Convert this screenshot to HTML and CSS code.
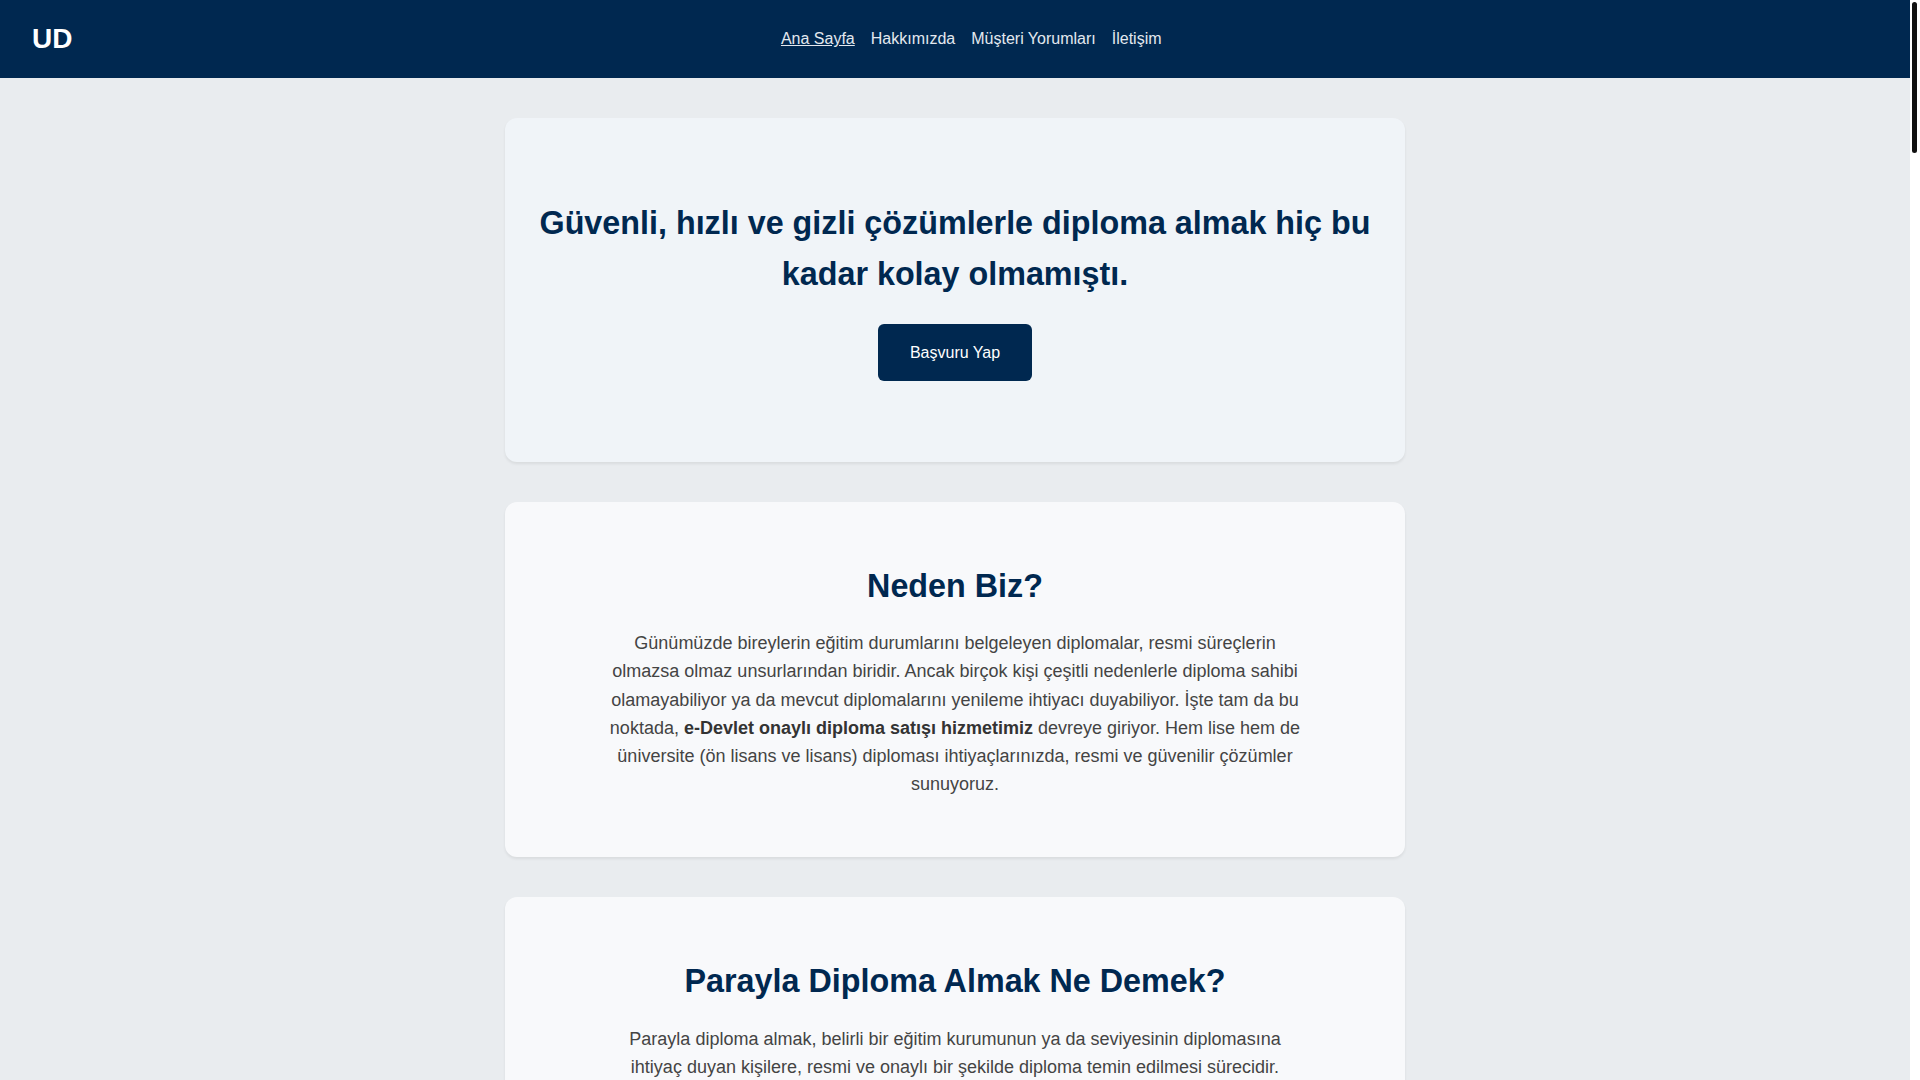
FILE: index.html
```html
<!DOCTYPE html>
<html lang="tr">
<head>
<meta charset="utf-8">
<title>UD - Diploma</title>
<link rel="stylesheet" href="styles.css">
</head>
<body>
<div class="page">
  <header class="site-header">
    <div class="logo">UD</div>
    <nav class="main-nav">
      <a href="#" class="nav-link active">Ana Sayfa</a>
      <a href="#" class="nav-link">Hakkımızda</a>
      <a href="#" class="nav-link">Müşteri Yorumları</a>
      <a href="#" class="nav-link">İletişim</a>
    </nav>
  </header>
  <main class="content">
    <section class="card hero">
      <h1 class="hero-title">Güvenli, hızlı ve gizli çözümlerle diploma almak hiç bu kadar kolay olmamıştı.</h1>
      <a href="#" class="btn">Başvuru Yap</a>
    </section>
    <section class="card">
      <h2 class="section-title">Neden Biz?</h2>
      <p class="section-text">Günümüzde bireylerin eğitim durumlarını belgeleyen diplomalar, resmi süreçlerin olmazsa olmaz unsurlarından biridir. Ancak birçok kişi çeşitli nedenlerle diploma sahibi olamayabiliyor ya da mevcut diplomalarını yenileme ihtiyacı duyabiliyor. İşte tam da bu noktada, <strong>e-Devlet onaylı diploma satışı hizmetimiz</strong> devreye giriyor. Hem lise hem de üniversite (ön lisans ve lisans) diploması ihtiyaçlarınızda, resmi ve güvenilir çözümler sunuyoruz.</p>
    </section>
    <section class="card">
      <h2 class="section-title">Parayla Diploma Almak Ne Demek?</h2>
      <p class="section-text">Parayla diploma almak, belirli bir eğitim kurumunun ya da seviyesinin diplomasına ihtiyaç duyan kişilere, resmi ve onaylı bir şekilde diploma temin edilmesi sürecidir. Özellikle iş başvurularında ve kariyer planlamasında diploma sahibi olmak büyük avantaj sağlar; tüm işlemler gizlilik ilkesine uygun olarak yürütülür.</p>
    </section>
  </main>
</div>
<div class="scrollbar" aria-hidden="true"><div class="scrollbar-thumb"></div></div>
</body>
</html>
```
FILE: styles.css
```css
* { box-sizing: border-box; }
html, body { margin: 0; padding: 0; }
body {
  background: #ffffff;
  font-family: "Liberation Sans", Arial, sans-serif;
  line-height: 1.6;
  color: #444;
}
.page {
  width: calc(100% - 10px);
  min-height: 100vh;
  background: #e9ecef;
  overflow: hidden;
}
.site-header {
  display: flex;
  align-items: center;
  height: 78px;
  padding: 0 32px;
  background: #002850;
}
.logo {
  color: #ffffff;
  font-size: 28px;
  font-weight: 700;
  line-height: 1;
}
.main-nav {
  flex: 1;
  display: flex;
  justify-content: center;
  gap: 16px;
  padding-right: 8px;
}
.nav-link {
  color: #e3e8ef;
  font-size: 16px;
  text-decoration: none;
}
.nav-link.active { text-decoration: underline; }
.content {
  max-width: 900px;
  margin: 40px auto;
  display: flex;
  flex-direction: column;
  gap: 40px;
}
.card {
  background: #f8f9fb;
  border-radius: 12px;
  padding: 59px 32px;
  text-align: center;
  box-shadow: 0 2px 3px rgba(0, 0, 0, 0.07);
}
.hero {
  background: #f0f4f8;
  padding: 80px 32px 81px;
}
.hero-title {
  margin: 0 0 24px;
  font-size: 32.3px;
  font-weight: 700;
  color: #002850;
  line-height: 51.2px;
}
.btn {
  display: inline-block;
  padding: 15.5px 32px;
  background: #002850;
  color: #ffffff;
  font-size: 16px;
  text-decoration: none;
  border-radius: 6px;
}
.section-title {
  margin: 0 0 17px;
  font-size: 32.3px;
  font-weight: 700;
  color: #002850;
  line-height: 51.2px;
}
.section-text {
  max-width: 700px;
  margin: 0 auto;
  font-size: 18px;
  line-height: 28.2px;
  color: #444;
}
.section-text strong { color: #333; }
.scrollbar {
  position: fixed;
  top: 0;
  right: 0;
  width: 10px;
  height: 100vh;
  background: #ffffff;
}
.scrollbar-thumb {
  margin: 2px 0 0 2px;
  width: 5px;
  height: 151px;
  border-radius: 3px;
  background: #111111;
}
```
